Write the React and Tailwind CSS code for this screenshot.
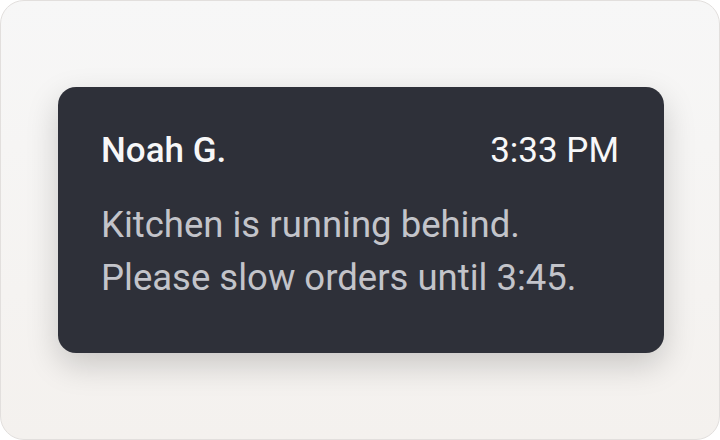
export default function App() {
  return (
    <div className="w-[720px] h-[440px] bg-white">
      <div
        className="w-full h-full rounded-[24px] border border-[#e2dfdd] bg-gradient-to-b from-[#f7f7f7] to-[#f4f1ee] flex items-center justify-center pl-[2px]"
        style={{ fontFamily: "Roboto, 'Noto Sans', sans-serif" }}
      >
        {/* Message card */}
        <div className="w-[606px] h-[266px] rounded-[18px] bg-[#2e3039] pl-[43px] pr-[45px] pt-[44px] shadow-[0_12px_32px_rgba(0,0,0,0.18)]">
          <div className="flex items-center justify-between">
            <h2 className="text-[35px] leading-[40px] font-medium text-[#f7f7f8]">Noah G.</h2>
            <span className="text-[35px] leading-[40px] text-[#f7f7f8]">3:33 PM</span>
          </div>
          <p className="mt-[27px] text-[36.5px] leading-[53px] text-[#c3c4ca]">
            Kitchen is running behind.
            <br />
            Please slow orders until 3:45.
          </p>
        </div>
      </div>
    </div>
  );
}
